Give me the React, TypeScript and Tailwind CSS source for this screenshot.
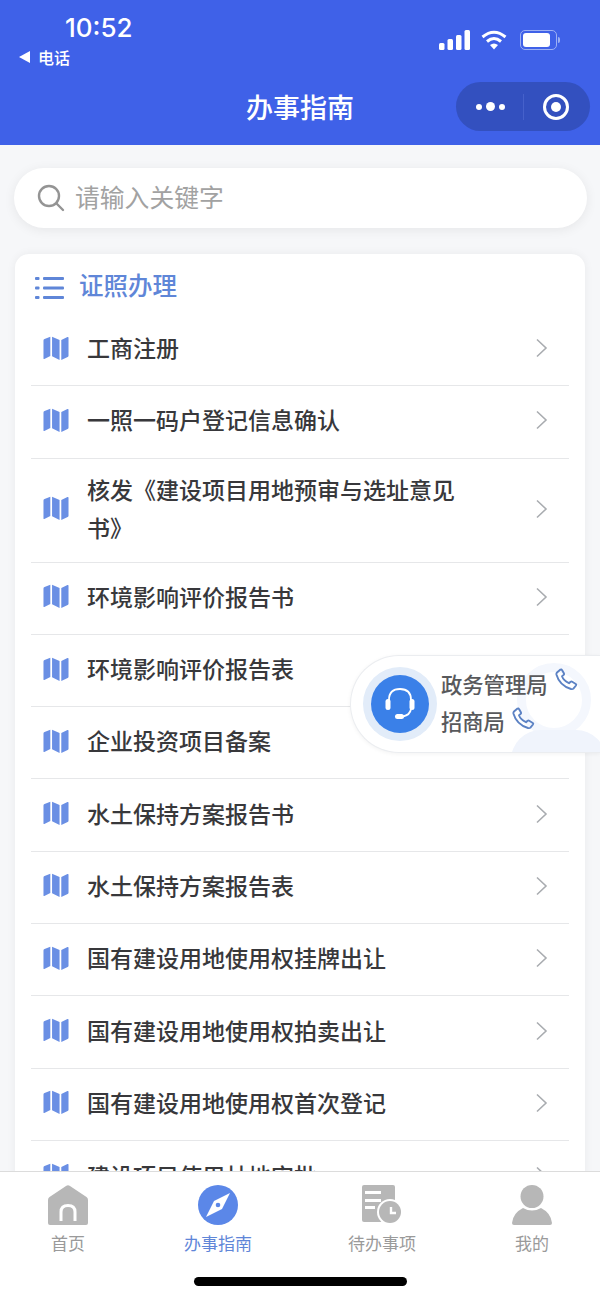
import React from 'react';

const ITEMS = [
  '工商注册',
  '一照一码户登记信息确认',
  '核发《建设项目用地预审与选址意见书》',
  '环境影响评价报告书',
  '环境影响评价报告表',
  '企业投资项目备案',
  '水土保持方案报告书',
  '水土保持方案报告表',
  '国有建设用地使用权挂牌出让',
  '国有建设用地使用权拍卖出让',
  '国有建设用地使用权首次登记',
  '建设项目使用林地审批',
];

const MapIcon = () => (
  <svg width="26" height="25" viewBox="0 0 27 25" fill="#6a8fe4" className="mb-[3px] shrink-0">
    <path d="M0.5 4.2 Q0.5 3 1.6 2.6 L7.6 0.4 V20.4 L1.4 23.4 Q0.5 23.8 0.5 22.6 Z" />
    <path d="M9.4 0.4 L17.2 3.6 V24.4 L9.4 20.6 Z" />
    <path d="M19 3.6 L25.4 0.6 Q26.5 0.2 26.5 1.4 V20 Q26.5 21 25.6 21.4 L19 24.4 Z" />
  </svg>
);

const Chevron = () => (
  <svg width="14" height="20" viewBox="0 0 14 20" fill="none" stroke="#a9acb0" strokeWidth="1.6" className="mb-[3px] shrink-0">
    <path d="M2 1.5 L11 10 L2 18.5" />
  </svg>
);

const Phone = () => (
  <svg width="23" height="23" viewBox="0 0 23 23" fill="none" stroke="#5c82c4" strokeWidth="1.9" strokeLinejoin="round" className="shrink-0">
    <path d="M2 4.5 L5.5 1.5 Q6.5 1 7 2 L9 5.5 Q9.4 6.4 8.6 7 L7 8.2 Q8.5 12.5 14 15.2 L15.6 13.8 Q16.4 13.2 17.2 13.7 L20.8 16 Q21.6 16.7 21 17.5 L18.4 20.6 Q17.6 21.4 16 21 Q4.5 17.5 1.4 6.5 Q1.2 5.2 2 4.5 Z" />
  </svg>
);

const Row = ({ title, last }: { title: string; last: boolean }) => (
  <div className={`flex min-h-[72.3px] items-center py-[11px] pl-[12px] pr-[20px] ${last ? '' : 'border-b border-[#e6e7e9]'}`}>
    <MapIcon />
    <div className="ml-[18px] w-[380px] pb-[5px] text-[23px] font-medium leading-[38px] text-[#38383b]">{title}</div>
    <div className="ml-auto flex"><Chevron /></div>
  </div>
);

const Tab = ({ label, active, icon, className = '' }: { label: string; active?: boolean; icon: React.ReactNode; className?: string }) => (
  <div className={`flex w-[150px] shrink-0 flex-col items-center ${className}`}>
    <div className="flex h-[40px] items-center justify-center">{icon}</div>
    <div className={`mt-[6px] text-[17px] leading-[24px] ${active ? 'text-[#5f86d8]' : 'text-[#9a9a9a]'}`}>{label}</div>
  </div>
);

export default function App() {
  return (
    <div
      className="relative flex h-[1298px] w-[600px] flex-col overflow-hidden bg-[#f6f7f9]"
      style={{ fontFamily: '"Noto Sans CJK SC", Inter, sans-serif' }}
    >
      {/* header */}
      <header className="h-[145px] shrink-0 bg-[#3f61e8] text-white">
        <div className="flex h-[82px] items-start justify-between">
          <div className="pl-[19px] pt-[13px]">
            <div className="pl-[46px] text-[26px] font-medium leading-[30px]" style={{ fontFamily: 'Inter, sans-serif' }}>10:52</div>
            <div className="mt-[4px] flex items-center text-[16px] font-medium leading-[20px]">
              <span className="mr-[8px] h-0 w-0 border-y-[6px] border-r-[11px] border-y-transparent border-r-white" />
              电话
            </div>
          </div>
          <div className="flex items-center pr-[40px] pt-[30px]">
            <svg width="31" height="20" viewBox="0 0 31 20" fill="white">
              <rect x="0" y="13" width="5.5" height="7" rx="1.5" />
              <rect x="8.5" y="9" width="5.5" height="11" rx="1.5" />
              <rect x="17" y="5" width="5.5" height="15" rx="1.5" />
              <rect x="25.5" y="0" width="5.5" height="20" rx="1.5" />
            </svg>
            <svg width="26" height="20" viewBox="0 0 26 20" fill="none" stroke="white" strokeWidth="3" className="ml-[11px]">
              <path d="M1.5 7 Q13 -2.5 24.5 7" />
              <path d="M6 11.5 Q13 5.5 20 11.5" />
              <path d="M13 19.5 L9 15 Q13 12 17 15 Z" fill="white" stroke="none" />
            </svg>
            <div className="ml-[13px] flex h-[20px] w-[37px] items-center rounded-[5px] border border-[#9db0f3] p-[2px]">
              <div className="h-full w-[27px] rounded-[3px] bg-white" />
            </div>
            <div className="ml-[1px] h-[6px] w-[2px] rounded-r-full bg-[#9db0f3]" />
          </div>
        </div>
        <div className="grid grid-cols-[1fr_auto_1fr] items-start">
          <div />
          <div className="pt-[7px] text-[27px] font-medium leading-[36px]">办事指南</div>
          <div className="flex justify-end pr-[10px]">
            <div className="flex h-[49px] w-[134px] items-center rounded-full bg-[#3350bf]">
              <div className="flex w-[67px] items-center justify-center gap-[4px] pl-[2px]">
                <span className="h-[6px] w-[6px] rounded-full bg-white" />
                <span className="h-[9px] w-[9px] rounded-full bg-white" />
                <span className="h-[6px] w-[6px] rounded-full bg-white" />
              </div>
              <div className="h-[26px] w-px bg-[#4661cb]" />
              <div className="flex flex-1 items-center justify-center pr-[2px]">
                <div className="flex h-[26px] w-[26px] items-center justify-center rounded-full border-[3px] border-white">
                  <span className="h-[10px] w-[10px] rounded-full bg-white" />
                </div>
              </div>
            </div>
          </div>
        </div>
      </header>

      {/* content */}
      <main className="min-h-0 flex-1 overflow-hidden">
        <div className="ml-[14px] mr-[13px] mt-[23px] flex h-[60px] items-center rounded-full bg-white pl-[23px] shadow-[0_2px_12px_rgba(0,0,0,0.07)]">
          <svg width="28" height="28" viewBox="0 0 28 28" fill="none" stroke="#949494" strokeWidth="2.4">
            <circle cx="12" cy="12" r="10" />
            <path d="M19.5 19.5 L26 26" strokeLinecap="round" />
          </svg>
          <span className="ml-[10px] pb-[4px] text-[24.8px] leading-[32px] text-[#a2a2a2]">请输入关键字</span>
        </div>

        <section className="ml-[15px] mt-[26px] w-[570px] rounded-t-[14px] bg-white px-[16px] shadow-[0_0_10px_rgba(0,0,0,0.06)]">
          <div className="flex h-[60px] items-center pl-[4px] pt-[8px]">
            <svg width="29" height="24" viewBox="0 0 29 24" fill="#5f86d8">
              <rect x="0" y="1" width="4.5" height="3" rx="1" />
              <rect x="8" y="1" width="21" height="3" rx="1" />
              <rect x="0" y="10.5" width="4.5" height="3" rx="1" />
              <rect x="8" y="10.5" width="21" height="3" rx="1" />
              <rect x="0" y="20" width="4.5" height="3" rx="1" />
              <rect x="8" y="20" width="21" height="3" rx="1" />
            </svg>
            <span className="ml-[15px] pb-[6px] text-[24.5px] font-medium leading-[32px] text-[#5f86d8]">证照办理</span>
          </div>
          {ITEMS.map((item, i) => (
            <Row key={item} title={item} last={i === ITEMS.length - 1} />
          ))}
        </section>
      </main>

      {/* floating contact */}
      <div className="absolute right-0 top-[655px] flex h-[98px] w-[250px] items-center overflow-hidden rounded-l-full border border-r-0 border-[#ebedf0] bg-white shadow-[0_1px_4px_rgba(0,0,0,0.05)]">
        <div className="absolute left-[166px] top-[7px] h-[74px] w-[74px] rounded-full border-[9px] border-[#f4f7fd]" />
        <div className="absolute left-[160px] top-[74px] h-[30px] w-[95px] rounded-t-[30px] bg-[#f0f4fc]" />
        <div className="relative ml-[12px] flex h-[74px] w-[74px] shrink-0 items-center justify-center rounded-full bg-[#e2ecf9]">
          <div className="flex h-[58px] w-[58px] items-center justify-center rounded-full bg-[#3a80e8]">
            <svg width="32" height="34" viewBox="0 0 32 34" fill="none" stroke="white" strokeWidth="1.8">
              <path d="M5 18 V13 Q5 2 16 2 Q27 2 27 13 V18" />
              <rect x="1.5" y="12" width="5" height="11" rx="2.5" fill="white" stroke="none" />
              <rect x="25.5" y="12" width="5" height="11" rx="2.5" fill="white" stroke="none" />
              <path d="M27 22 Q26 28 19 29.5" />
              <rect x="11" y="27" width="9" height="5" rx="2.5" fill="white" stroke="none" />
            </svg>
          </div>
        </div>
        <div className="relative ml-[4px] flex flex-col gap-[6px] pb-[5px] text-[21.3px] font-medium leading-[31px] text-[#58595c]">
          <div className="flex items-start">政务管理局<span className="ml-[7px] mt-[0px]"><Phone /></span></div>
          <div className="flex items-start">招商局<span className="ml-[7px] mt-[2px]"><Phone /></span></div>
        </div>
      </div>

      {/* tab bar */}
      <footer className="relative z-10 h-[127px] shrink-0 border-t border-[#dcdcdc] bg-white">
        <div className="-ml-[7px] flex pt-[13px]">
          <Tab
            label="首页"
            icon={
              <svg width="40" height="40" viewBox="0 0 40 40" fill="#b7b7b7">
                <path fillRule="evenodd" d="M18 1 Q20 -0.5 22 1 L38.5 12 Q40 13 40 15 V38 Q40 40 38 40 H2 Q0 40 0 38 V15 Q0 13 1.5 12 Z M11.5 36 H14.5 V27 Q14.5 22 20 22 Q25.5 22 25.5 27 V36 H28.5 V27 Q28.5 19 20 19 Q11.5 19 11.5 27 Z" />
              </svg>
            }
          />
          <Tab
            label="办事指南"
            active
            icon={
              <svg width="40" height="40" viewBox="0 0 40 40">
                <circle cx="20" cy="20" r="20" fill="#5b87e8" />
                <path d="M32 8 L24 24 L8 32 L16 16 Z" fill="white" />
                <circle cx="20" cy="20" r="2.3" fill="#5b87e8" />
              </svg>
            }
          />
          <Tab
            label="待办事项"
            className="ml-[14px]"
            icon={
              <svg width="40" height="40" viewBox="0 0 40 40">
                <rect x="0" y="0" width="33" height="37" rx="2" fill="#b7b7b7" />
                <rect x="3" y="6" width="16" height="3" fill="white" />
                <rect x="3" y="14" width="16" height="3" fill="white" />
                <rect x="3" y="21" width="10" height="3" fill="white" />
                <circle cx="28" cy="27" r="13" fill="white" />
                <circle cx="28" cy="27" r="11" fill="#b7b7b7" />
                <path d="M29 22 V28 H34" stroke="white" strokeWidth="2.4" fill="none" />
              </svg>
            }
          />
          <Tab
            label="我的"
            icon={
              <svg width="40" height="40" viewBox="0 0 40 40" fill="#b7b7b7">
                <circle cx="20" cy="11.5" r="11.5" />
                <path d="M0 38 Q1 28 11 23 Q20 28 29 23 Q39 28 40 38 Q40 40 38 40 H2 Q0 40 0 38 Z" />
              </svg>
            }
          />
        </div>
        <div className="absolute left-[194px] top-[105px] h-[9px] w-[213px] rounded-full bg-black" />
      </footer>
    </div>
  );
}
